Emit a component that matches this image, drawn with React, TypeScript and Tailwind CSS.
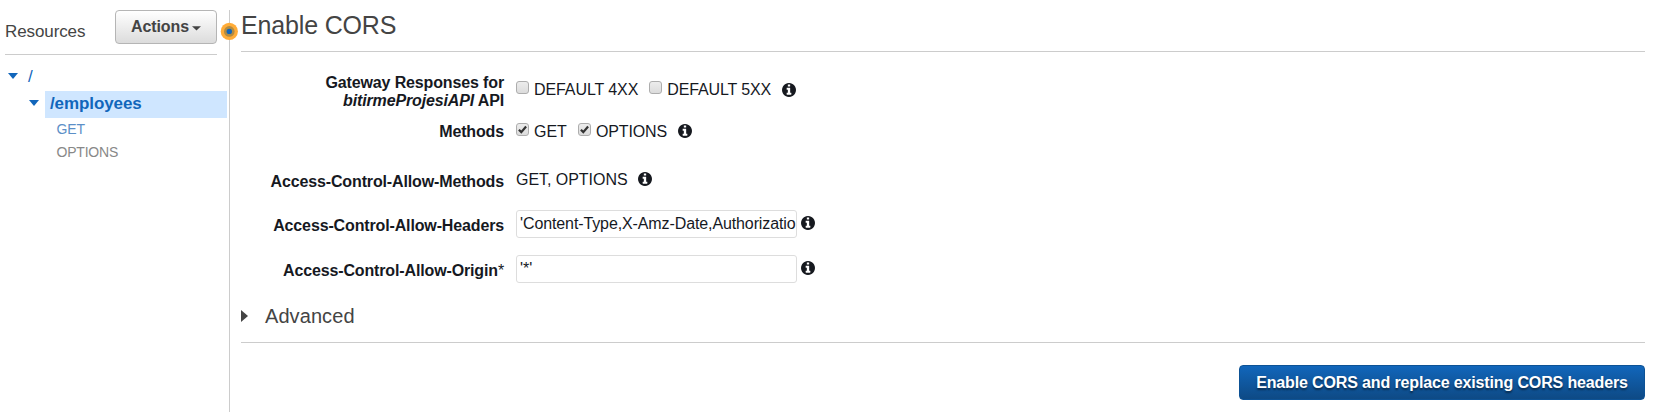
import type { ReactNode } from "react";

function Info({ className = "" }: { className?: string }) {
  return (
    <svg viewBox="0 128 1536 1536" className={`size-[14px] shrink-0 ${className}`} fill="#16191f">
      <path d="M1024 1376v-160q0-14-9-23t-23-9h-96v-512q0-14-9-23t-23-9h-320q-14 0-23 9t-9 23v160q0 14 9 23t23 9h96v320h-96q-14 0-23 9t-9 23v160q0 14 9 23t23 9h448q14 0 23-9t9-23zm-128-896v-160q0-14-9-23t-23-9h-192q-14 0-23 9t-9 23v160q0 14 9 23t23 9h192q14 0 23-9t9-23zm640 416q0 209-103 385.5t-279.5 279.5-385.5 103-385.5-103-279.5-279.5-103-385.5 103-385.5 279.5-279.5 385.5-103 385.5 103 279.5 279.5 103 385.5z" />
    </svg>
  );
}

function Check({ checked = false }: { checked?: boolean }) {
  return (
    <span className="flex size-[13px] shrink-0 items-center justify-center rounded-[3px] border border-[#adadad] bg-linear-to-b from-[#ececec] to-[#dcdcdc]">
      {checked && (
        <svg viewBox="0 0 9 9" className="size-[9px]" fill="none" stroke="#333" strokeWidth="2.2">
          <path d="M0.9 4.7 3.3 7.1 8.1 1.5" />
        </svg>
      )}
    </span>
  );
}

function Caret() {
  return (
    <svg viewBox="0 0 10 6" className="h-[6px] w-[10px] shrink-0" fill="#1166bb">
      <path d="M0 0h10L5 6z" />
    </svg>
  );
}

function Row({ label, className, valueClass, children }: { label: ReactNode; className: string; valueClass: string; children: ReactNode }) {
  return (
    <div className={`flex items-start ${className}`}>
      <div className="mr-[12px] w-[263px] text-right font-bold leading-[18px] tracking-[-0.14px]">{label}</div>
      <div className={`flex items-start leading-[18px] ${valueClass}`}>{children}</div>
    </div>
  );
}

function Sidebar() {
  return (
    <aside className="w-[229px] shrink-0 pl-[5px] pt-[10px] text-[#444]">
      <div className="flex h-[45px] w-[212px] items-start justify-between border-b border-[#ccc]">
        <span className="mt-[12px] text-[17px] leading-[20px] tracking-[-0.1px]">Resources</span>
        <button className="flex h-[34px] w-[102px] items-center justify-center gap-[3px] rounded-[4px] border border-[#b5b5b5] bg-linear-to-b from-white to-[#dcdcdc] text-[16px] font-bold tracking-[-0.08px] text-[#444]">
          Actions
          <svg viewBox="0 0 9 5" className="mt-[3px] h-[5px] w-[9px] shrink-0" fill="#444">
            <path d="M0 0.3h9L4.5 4.6z" />
          </svg>
        </button>
      </div>
      <div className="mt-[12px] flex h-[18px] items-center pl-[3px] text-[#1166bb]">
        <Caret />
        <span className="ml-[10px] mt-[2px] text-[17px] leading-[18px]">/</span>
      </div>
      <div className="mt-[6px] flex h-[27px] items-center pl-[24px]">
        <div className="-mt-[3px] flex">
          <Caret />
        </div>
        <div className="ml-[6px] h-[27px] w-[182px] bg-[#cfe6ff] pl-[5px] text-[17px] font-bold leading-[25px] tracking-[-0.1px] text-[#1166bb]">/employees</div>
      </div>
      <div className="pl-[51.5px] text-[14px] leading-[23px] tracking-[-0.15px] text-[#5b8fc7]">GET</div>
      <div className="pl-[51.5px] text-[14px] leading-[23px] tracking-[-0.2px] text-[#888]">OPTIONS</div>
    </aside>
  );
}

export default function App() {
  return (
    <div className="flex h-[412px] w-[1656px] overflow-hidden bg-white font-['Liberation_Sans',Arial,sans-serif] text-[16px] text-[#16191f]">
      <Sidebar />
      <div className="relative mt-[10px] w-px shrink-0 bg-[#ccc]">
        <svg viewBox="0 0 18 18" className="absolute -left-[9px] top-[12px] size-[18px] max-w-none">
          <circle cx="9.3" cy="9.4" r="8.6" fill="#ffac38" />
          <circle cx="9.3" cy="9.4" r="5.3" fill="#b28b42" />
          <circle cx="9.3" cy="9.4" r="2.7" fill="#1166bb" />
        </svg>
      </div>
      <main className="ml-[11px] w-[1404px] pt-[10px]">
        <h1 className="h-[42px] border-b border-[#ccc] text-[25px] leading-[31px] tracking-[-0.16px] text-[#444]">Enable CORS</h1>
        <Row
          className="mt-[22px] h-[49px]"
          valueClass="pt-[7px]"
          label={<>Gateway Responses for<br /><em>bitirmeProjesiAPI</em> API</>}
        >
          <Check />
          <span className="ml-[5px] mr-[11px] tracking-[-0.09px]">DEFAULT 4XX</span>
          <Check />
          <span className="ml-[5px] mr-[11px] tracking-[-0.12px]">DEFAULT 5XX</span>
          <Info className="mt-[2px]" />
        </Row>
        <Row className="h-[50px]" valueClass="" label="Methods">
          <Check checked />
          <span className="ml-[5px] mr-[11px]">GET</span>
          <Check checked />
          <span className="ml-[5px] mr-[11px] tracking-[-0.12px]">OPTIONS</span>
          <Info className="mt-[1px]" />
        </Row>
        <Row className="h-[44px]" valueClass="-mt-[2px]" label="Access-Control-Allow-Methods">
          <span className="mr-[10px] tracking-[-0.04px]">GET, OPTIONS</span>
          <Info className="mt-[1px]" />
        </Row>
        <Row className="h-[45px]" valueClass="-mt-[7px]" label="Access-Control-Allow-Headers">
          <div className="mr-[4px] h-[28px] w-[281px] whitespace-nowrap rounded-[3px] border border-[#ddd] pl-[3px] leading-[26px] tracking-[-0.11px]">'Content-Type,X-Amz-Date,Authorizatio</div>
          <Info className="mt-[6px]" />
        </Row>
        <Row
          className="h-[45px]"
          valueClass="-mt-[7px]"
          label={<>Access-Control-Allow-Origin<span className="font-normal">*</span></>}
        >
          <div className="mr-[4px] h-[28px] w-[281px] rounded-[3px] border border-[#ddd] pl-[3px] leading-[26px]">'*'</div>
          <Info className="mt-[6px]" />
        </Row>
        <div className="flex h-[36px] items-start border-b border-[#ccc] text-[20px] leading-[22px] text-[#444]">
          <svg viewBox="0 0 7 12" className="mt-[3px] mr-[17px] h-[12px] w-[7px]" fill="#444">
            <path d="M0 0v12L7 6z" />
          </svg>
          <span className="-mt-[2px] tracking-[0.08px]">Advanced</span>
        </div>
        <div className="mt-[22px] flex justify-end">
          <button className="h-[35px] w-[406px] whitespace-nowrap rounded-[4px] border border-[#0d5295] bg-linear-to-b from-[#1166bb] to-[#0e4a85] pt-[1px] text-[16px] font-bold tracking-[-0.14px] text-white [text-shadow:0_2px_2px_rgba(0,0,0,0.5)]">
            Enable CORS and replace existing CORS headers
          </button>
        </div>
      </main>
    </div>
  );
}
